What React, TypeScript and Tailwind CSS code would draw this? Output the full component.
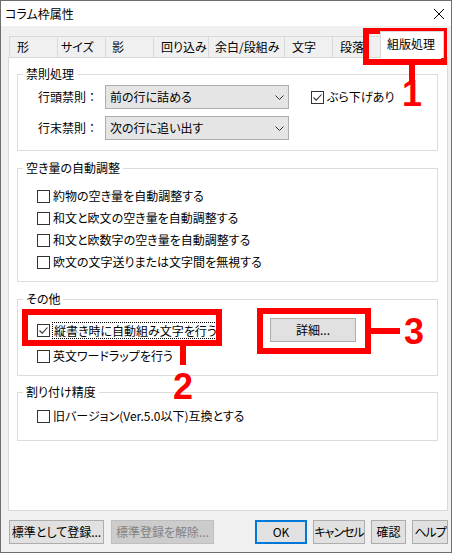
import type { ReactNode } from "react";

const TABS = [
  { label: "形", className: "w-[48px] pl-[7px]" },
  { label: "サイズ", className: "w-[48px] pl-[3px]" },
  { label: "影", className: "w-[48px] pl-[6px]" },
  { label: "回り込み", className: "w-[55px] pl-[7px]" },
  { label: "余白/段組み", className: "w-[76px] pl-[6px]" },
  { label: "文字", className: "w-[48px] pl-[7px]" },
  { label: "段落", className: "w-[48px] pl-[7px]" },
];

function CheckBox({ checked = false }: { checked?: boolean }) {
  return (
    <span className="flex h-[13px] w-[13px] shrink-0 items-center justify-center border border-[#333333] bg-white">
      {checked && (
        <svg width="11" height="11" viewBox="0 0 11 11">
          <path d="M1.5 5.5 L4.2 8.2 L9.5 2.5" fill="none" stroke="#333333" strokeWidth="1.1" />
        </svg>
      )}
    </span>
  );
}

function Option({ label, checked }: { label: string; checked?: boolean }) {
  return (
    <div className="flex h-[22px] items-center gap-[3px]">
      <CheckBox checked={checked} />
      <span>{label}</span>
    </div>
  );
}

function Group({ title, className, children }: { title: string; className: string; children: ReactNode }) {
  return (
    <fieldset className={`w-[421px] border border-[#dcdcdc] ${className}`}>
      <legend className="ml-[5px] px-[3px] leading-[16px]">{title}</legend>
      {children}
    </fieldset>
  );
}

function Select({ value }: { value: string }) {
  return (
    <div className="flex h-[24px] w-[184px] items-center justify-between border border-[#adadad] bg-[#e5e5e5] pl-[4px] pr-[4px]">
      <span>{value}</span>
      <svg width="9" height="5" viewBox="0 0 9 5">
        <path d="M0.5 0.5 L4.5 4.5 L8.5 0.5" fill="none" stroke="#333333" />
      </svg>
    </div>
  );
}

function Button({ children, className }: { children: ReactNode; className: string }) {
  return (
    <button
      type="button"
      className={`flex h-[24px] shrink-0 items-center justify-center whitespace-nowrap border ${className}`}
    >
      {children}
    </button>
  );
}

export default function App() {
  return (
    <div className="relative h-[554px] w-[455px] bg-white text-[12px] text-black font-['Noto_Sans_CJK_JP','Yu_Gothic_UI',sans-serif] [font-feature-settings:'palt']">
      <div className="flex h-[553px] w-[452px] flex-col border border-[#6e6e6e]">
        {/* title bar */}
        <div className="flex h-[25px] shrink-0 items-center justify-between bg-white pl-[4px] pr-[7px]">
          <span>コラム枠属性</span>
          <svg width="10" height="10" viewBox="0 0 10 10">
            <path d="M0 0 L10 10 M10 0 L0 10" stroke="#000" strokeWidth="1" />
          </svg>
        </div>

        <div className="flex flex-1 flex-col bg-[#f0f0f0] pl-[7px] pr-[3px] pt-[5px]">
          {/* tabs */}
          <div className="flex h-[26px] items-end pl-[1px]">
            {TABS.map((t) => (
              <div
                key={t.label}
                className={`flex h-[21px] items-center border-l border-t border-[#d9d9d9] bg-[#f0f0f0] ${t.className}`}
              >
                {t.label}
              </div>
            ))}
            <div className="relative z-10 -mb-px flex h-[27px] w-[64px] items-center border-x border-t border-[#d9d9d9] bg-white pb-[3px] pl-[6px]">
              組版処理
            </div>
          </div>

          {/* panel */}
          <div className="flex h-[454px] w-[440px] flex-col border border-[#d9d9d9] bg-white pl-[8px] pt-[8px]">
            <Group title="禁則処理" className="h-[85px]">
              <div className="flex flex-col gap-[7px] pl-[20px] pt-[3px]">
                <div className="flex items-center">
                  <span className="w-[67px] [font-feature-settings:normal]">行頭禁則：</span>
                  <Select value="前の行に詰める" />
                  <div className="ml-[22px] flex items-center gap-[3px]">
                    <CheckBox checked />
                    <span>ぶら下げあり</span>
                  </div>
                </div>
                <div className="flex items-center">
                  <span className="w-[67px] [font-feature-settings:normal]">行末禁則：</span>
                  <Select value="次の行に追い出す" />
                </div>
              </div>
            </Group>

            <Group title="空き量の自動調整" className="mt-[9px] h-[122px]">
              <div className="flex flex-col pl-[19px] pt-[9px]">
                <Option label="約物の空き量を自動調整する" />
                <Option label="和文と欧文の空き量を自動調整する" />
                <Option label="和文と欧数字の空き量を自動調整する" />
                <Option label="欧文の文字送りまたは文字間を無視する" />
              </div>
            </Group>

            <Group title="その他" className="mt-[9px] h-[85px]">
              <div className="flex flex-col pl-[19px] pt-[11px]">
                <div className="flex h-[24px] items-center">
                  <div className="flex w-[233px] items-center gap-[2px]">
                    <CheckBox checked />
                    <span className="border border-dotted border-black px-[1px] leading-[15px]">
                      縦書き時に自動組み文字を行う
                    </span>
                  </div>
                  <Button className="w-[86px] border-[#adadad] bg-[#e1e1e1]">詳細...</Button>
                </div>
                <div className="mt-[3px]">
                  <Option label="英文ワードラップを行う" />
                </div>
              </div>
            </Group>

            <Group title="割り付け精度" className="mt-[8px] h-[57px]">
              <div className="pl-[19px] pt-[5px]">
                <Option label="旧バージョン(Ver.5.0以下)互換とする" />
              </div>
            </Group>
          </div>

          {/* dialog buttons */}
          <div className="mt-[9px] flex h-[24px] items-center pl-[1px]">
            <Button className="w-[95px] border-[#adadad] bg-[#e1e1e1]">標準として登録...</Button>
            <Button className="ml-[7px] w-[103px] border-[#bfbfbf] bg-[#cccccc] text-[#838383]">標準登録を解除...</Button>
            <Button className="ml-[41px] w-[52px] border-2 border-[#0078d7] bg-[#e1e1e1]">OK</Button>
            <Button className="ml-[6px] w-[52px] border-[#adadad] bg-[#e1e1e1] tracking-[-1px]">キャンセル</Button>
            <Button className="ml-[6px] w-[35px] border-[#adadad] bg-[#e1e1e1]">確認</Button>
            <Button className="ml-[6px] w-[36px] border-[#adadad] bg-[#e1e1e1] tracking-[-1px]">ヘルプ</Button>
          </div>
        </div>
      </div>

      {/* red annotations */}
      <div className="absolute left-[363px] top-[28px] h-[37px] w-[84px] border-[6px] border-[#ff0000]" />
      <div className="absolute left-[409px] top-[65px] h-[16px] w-[6px] bg-[#ff0000]" />
      <div className="absolute left-[397px] top-[76px] w-[30px] text-center font-['Liberation_Sans',Arial,sans-serif] text-[36px] font-bold leading-[36px] text-[#ff0000]">
        1
      </div>

      <div className="absolute left-[22px] top-[309px] h-[37px] w-[200px] border-[6px] border-[#ff0000]" />
      <div className="absolute left-[180px] top-[346px] h-[19px] w-[6px] bg-[#ff0000]" />
      <div className="absolute left-[168px] top-[369px] w-[30px] text-center font-['Liberation_Sans',Arial,sans-serif] text-[36px] font-bold leading-[36px] text-[#ff0000]">
        2
      </div>

      <div className="absolute left-[257px] top-[308px] h-[46px] w-[114px] border-[6px] border-[#ff0000]" />
      <div className="absolute left-[370px] top-[328px] h-[6px] w-[30px] bg-[#ff0000]" />
      <div className="absolute left-[399px] top-[314px] w-[30px] text-center font-['Liberation_Sans',Arial,sans-serif] text-[36px] font-bold leading-[36px] text-[#ff0000]">
        3
      </div>
    </div>
  );
}
